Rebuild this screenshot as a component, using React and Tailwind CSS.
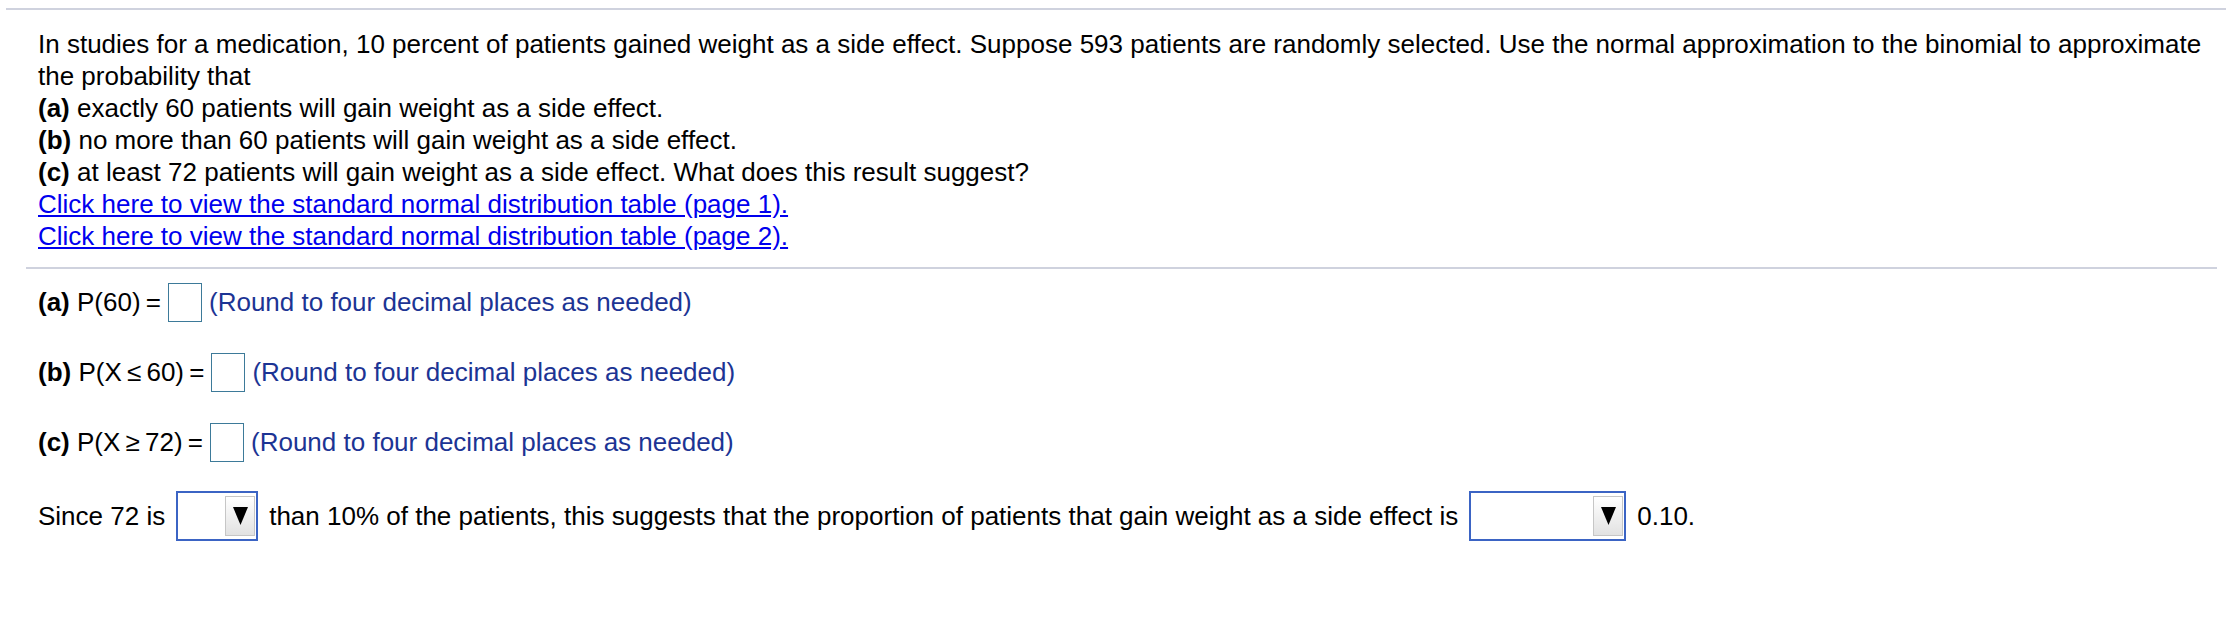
import React from "react";

const font = { fontFamily: '"Liberation Sans", Arial, sans-serif' };

const AnswerBox = () => (
  <span className="inline-block w-[34px] h-[39px] border-[1.5px] border-[#3d7a99] bg-white" />
);

const Dropdown = ({ width }) => (
  <span
    className={`inline-flex items-center justify-end h-[50px] border-2 border-[#3b64c4] bg-white pr-[1px] ${width}`}
  >
    <span className="flex items-center justify-center w-[30px] h-[40px] border border-[#c6c6c6] bg-gradient-to-b from-white to-[#e2e2e2]">
      <svg width="15" height="18" viewBox="0 0 15 18">
        <polygon points="0,0 15,0 7.5,18" fill="#000" />
      </svg>
    </span>
  </span>
);

const Hint = () => (
  <span className="text-[#1c3494]">(Round to four decimal places as needed)</span>
);

export default function App() {
  return (
    <div className="w-full h-[636px] bg-white text-black text-[26px]" style={font}>
      <div className="pt-[8px] pl-[6px]">
        <div className="h-[2px] bg-[#cfd2de]" />
      </div>

      {/* question */}
      <div className="pl-[38px] pt-[18px] leading-[32px] whitespace-nowrap">
        <div>
          In studies for a medication, 10 percent of patients gained weight as a side effect. Suppose 593 patients are
          randomly selected. Use the normal approximation to the binomial to approximate
        </div>
        <div>the probability that</div>
        <div>
          <b>(a)</b> exactly 60 patients will gain weight as a side effect.
        </div>
        <div>
          <b>(b)</b> no more than 60 patients will gain weight as a side effect.
        </div>
        <div>
          <b>(c)</b> at least 72 patients will gain weight as a side effect. What does this result suggest?
        </div>
        <div>
          <a href="#" className="text-[#0000ee] underline">
            Click here to view the standard normal distribution table (page 1).
          </a>
        </div>
        <div>
          <a href="#" className="text-[#0000ee] underline">
            Click here to view the standard normal distribution table (page 2).
          </a>
        </div>
      </div>

      <div className="pl-[26px] pr-[9px] pt-[15px]">
        <div className="h-[2px] bg-[#cfd2de]" />
      </div>

      {/* answers */}
      <div className="pl-[38px] whitespace-nowrap">
        <div className="flex items-center gap-[7px] h-[40px] mt-[13px]">
          <span>
            <b>(a)</b> P(60)&#8201;=
          </span>
          <AnswerBox />
          <Hint />
        </div>
        <div className="flex items-center gap-[7px] h-[40px] mt-[30px]">
          <span>
            <b>(b)</b> P(X&#8201;≤&#8201;60)&#8201;=
          </span>
          <AnswerBox />
          <Hint />
        </div>
        <div className="flex items-center gap-[7px] h-[40px] mt-[30px]">
          <span>
            <b>(c)</b> P(X&#8201;≥&#8201;72)&#8201;=
          </span>
          <AnswerBox />
          <Hint />
        </div>
        <div className="flex items-center gap-[11px] h-[50px] mt-[29px]">
          <span>Since 72 is</span>
          <Dropdown width="w-[82px]" />
          <span>than 10% of the patients, this suggests that the proportion of patients that gain weight as a side effect is</span>
          <Dropdown width="w-[157px]" />
          <span>0.10.</span>
        </div>
      </div>
    </div>
  );
}
